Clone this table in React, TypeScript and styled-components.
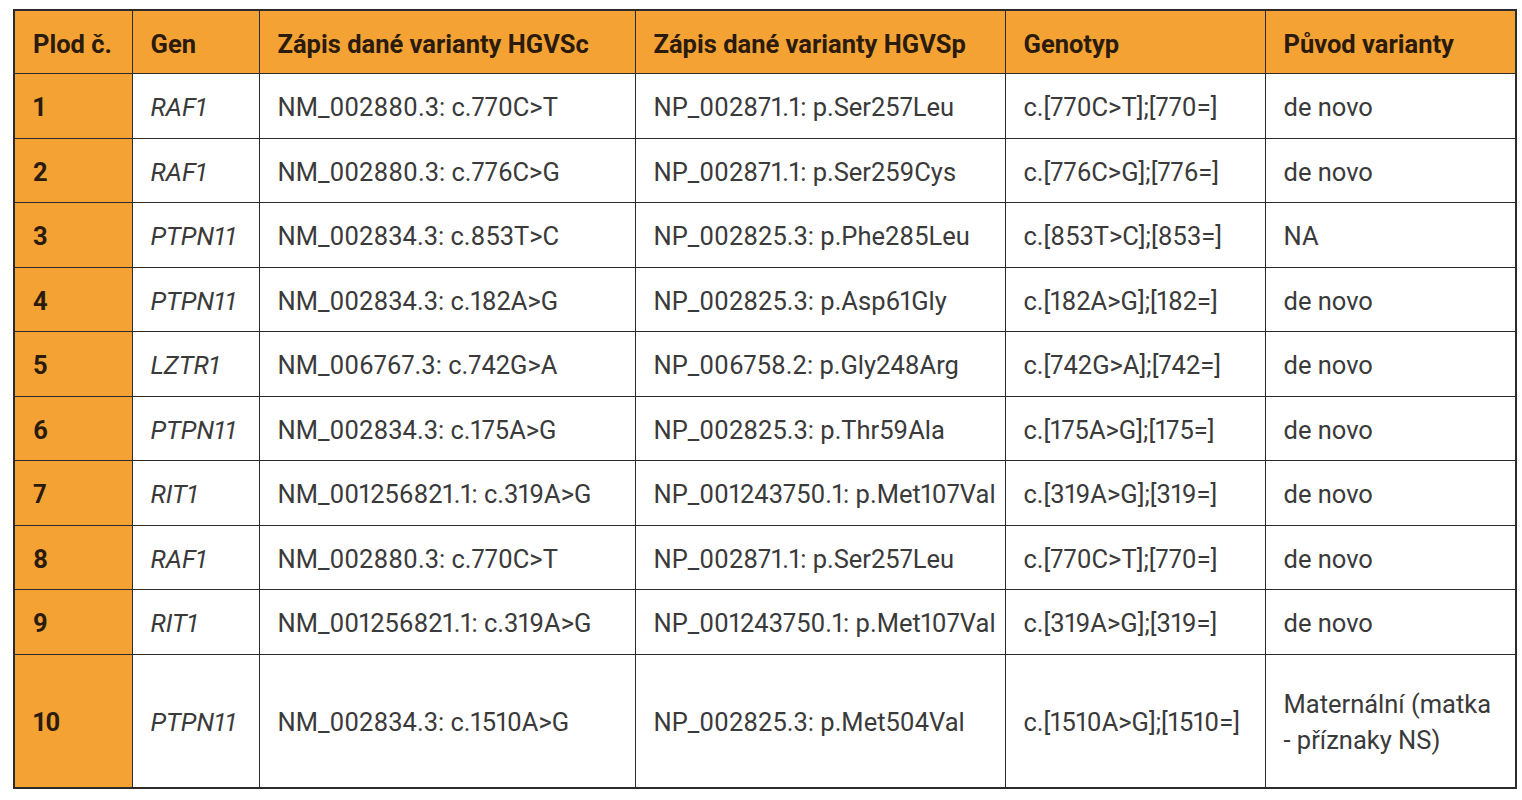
import React from 'react';
import styled, { createGlobalStyle } from 'styled-components';

const GlobalStyle = createGlobalStyle`
  body {
    margin: 0;
    background: #fff;
    font-family: Roboto, "Liberation Sans", sans-serif;
  }
`;

const Page = styled.div`
  padding: 9px 0 0 13px;
`;

const Table = styled.table`
  border-collapse: collapse;
  table-layout: fixed;
  width: 1502px;
  border: 2px solid #2b2b2b;
`;

const HeadCell = styled.th`
  background: #f4a234;
  color: #2a1b0d;
  font-weight: 700;
  font-size: 25.5px;
  text-align: left;
  padding: 3px 18px 0;
  height: 59px;
  border: 1.5px solid #2b2b2b;
  white-space: nowrap;
  font-variant-numeric: proportional-nums;
`;

const Cell = styled.td<{ $orange?: boolean; $italic?: boolean; $tall?: boolean }>`
  background: ${(p) => (p.$orange ? '#f4a234' : '#fff')};
  color: ${(p) => (p.$orange ? '#2a1b0d' : '#3a3a3a')};
  font-weight: ${(p) => (p.$orange ? 700 : 400)};
  font-style: ${(p) => (p.$italic ? 'italic' : 'normal')};
  font-size: 25.5px;
  line-height: 36px;
  padding: 3px 18px 0;
  height: ${(p) => (p.$tall ? '129px' : '60.5px')};
  border: 1.5px solid #2b2b2b;
  vertical-align: middle;
  white-space: nowrap;
  font-variant-numeric: proportional-nums;
`;

const widths = [118, 127, 376, 370, 260, 251];

const headers = [
  'Plod č.',
  'Gen',
  'Zápis dané varianty HGVSc',
  'Zápis dané varianty HGVSp',
  'Genotyp',
  'Původ varianty',
];

const rows = [
  ['1', 'RAF1', 'NM_002880.3: c.770C>T', 'NP_002871.1: p.Ser257Leu', 'c.[770C>T];[770=]', 'de novo'],
  ['2', 'RAF1', 'NM_002880.3: c.776C>G', 'NP_002871.1: p.Ser259Cys', 'c.[776C>G];[776=]', 'de novo'],
  ['3', 'PTPN11', 'NM_002834.3: c.853T>C', 'NP_002825.3: p.Phe285Leu', 'c.[853T>C];[853=]', 'NA'],
  ['4', 'PTPN11', 'NM_002834.3: c.182A>G', 'NP_002825.3: p.Asp61Gly', 'c.[182A>G];[182=]', 'de novo'],
  ['5', 'LZTR1', 'NM_006767.3: c.742G>A', 'NP_006758.2: p.Gly248Arg', 'c.[742G>A];[742=]', 'de novo'],
  ['6', 'PTPN11', 'NM_002834.3: c.175A>G', 'NP_002825.3: p.Thr59Ala', 'c.[175A>G];[175=]', 'de novo'],
  ['7', 'RIT1', 'NM_001256821.1: c.319A>G', 'NP_001243750.1: p.Met107Val', 'c.[319A>G];[319=]', 'de novo'],
  ['8', 'RAF1', 'NM_002880.3: c.770C>T', 'NP_002871.1: p.Ser257Leu', 'c.[770C>T];[770=]', 'de novo'],
  ['9', 'RIT1', 'NM_001256821.1: c.319A>G', 'NP_001243750.1: p.Met107Val', 'c.[319A>G];[319=]', 'de novo'],
  ['10', 'PTPN11', 'NM_002834.3: c.1510A>G', 'NP_002825.3: p.Met504Val', 'c.[1510A>G];[1510=]', 'Maternální (matka\n- příznaky NS)'],
];

export default function App() {
  return (
    <Page>
      <GlobalStyle />
      <Table>
        <colgroup>
          {widths.map((w, i) => (
            <col key={i} style={{ width: w }} />
          ))}
        </colgroup>
        <thead>
          <tr>
            {headers.map((h) => (
              <HeadCell key={h}>{h}</HeadCell>
            ))}
          </tr>
        </thead>
        <tbody>
          {rows.map((r, ri) => {
            const tall = ri === rows.length - 1;
            return (
              <tr key={ri}>
                {r.map((c, ci) => (
                  <Cell key={ci} $orange={ci === 0} $italic={ci === 1} $tall={tall}>
                    {c.split('\n').map((line, li) => (
                      <React.Fragment key={li}>
                        {li > 0 && <br />}
                        {line}
                      </React.Fragment>
                    ))}
                  </Cell>
                ))}
              </tr>
            );
          })}
        </tbody>
      </Table>
    </Page>
  );
}
